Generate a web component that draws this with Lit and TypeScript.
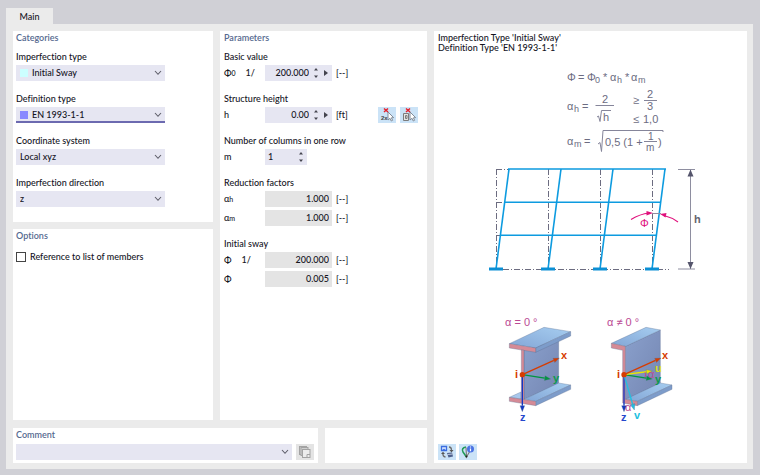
import { LitElement, html, svg, css, nothing } from "lit";
import { customElement, property } from "lit/decorators.js";

const chevron = html`<svg class="chevron" viewBox="0 0 8 6" aria-hidden="true"><path d="M1 1 L4 4.3 L7 1" /></svg>`;

@customElement("choice-field")
class ChoiceField extends LitElement {
  @property() label = "";
  @property() value = "";
  @property() swatch = "";
  @property({ type: Boolean }) active = false;

  static styles = css`
    :host { display: block; }
    label { display: block; height: 16px; line-height: 16px; }
    .box { display: flex; align-items: center; height: 16px; background: #e6e6f2; padding: 0 4px; position: relative; }
    .active { box-shadow: inset 0 -2px 0 #6c6ab0; }
    .swatch { width: 8px; height: 8px; flex: none; }
    select { appearance: none; border: 0; outline: 0; background: transparent; flex: 1; min-width: 0; font: inherit; color: inherit; padding: 0 12px 0 0; margin: 0; height: 16px; font-variant-ligatures: none; }
    .swatch + select { padding-left: 4px; }
    .chevron { position: absolute; right: 3px; top: 5px; width: 8px; height: 6px; fill: none; stroke: #5f5f6a; stroke-width: 1.1; pointer-events: none; }
  `;

  render() {
    return html`
      <label for="s">${this.label}</label>
      <div class="box ${this.active ? "active" : ""}">
        ${this.swatch ? html`<span class="swatch" style="background:${this.swatch}"></span>` : nothing}
        <select id="s"><option>${this.value}</option></select>
        ${chevron}
      </div>`;
  }
}

const flange = { top: "#a9c8ec", front: "#d58a96", side: "#7d9cca" };

const arrow = (x1: number, y1: number, x2: number, y2: number, color: string) => {
  const a = Math.atan2(y2 - y1, x2 - x1);
  const bx = x2 - 18 * Math.cos(a);
  const by = y2 - 18 * Math.sin(a);
  const dx = 7 * Math.sin(a);
  const dy = 7 * Math.cos(a);
  return svg`<path class="shaft" d="M${x1} ${y1} L${bx} ${by}" stroke=${color} />
    <path class="head" d="M${x2} ${y2} L${bx + dx} ${by - dy} L${bx - dx} ${by + dy} Z" fill=${color} />`;
};

const columns = [496, 548, 600, 652];

const drawing = html`
<svg class="drawing" viewBox="434 54 313 390" preserveAspectRatio="xMidYMin meet" role="img" aria-label="Initial sway sketch">
  <defs>
    <linearGradient id="web" x1="0" y1="0" x2="1" y2="1">
      <stop offset="0" stop-color="#8aa0cc" /><stop offset="1" stop-color="#7486b2" />
    </linearGradient>
    <linearGradient id="plate" x1="0" y1="1" x2="1" y2="0">
      <stop offset="0" stop-color="#83a6d6" /><stop offset="1" stop-color="#a6cdf0" />
    </linearGradient>
  </defs>

  <g class="formula">
    <text x="567" y="81">Φ</text><text x="578" y="81">=</text><text x="587" y="81">Φ</text><text class="sub" x="595" y="83">0</text>
    <text x="603" y="81">*</text><text x="610" y="81">α</text><text class="sub" x="617" y="83">h</text>
    <text x="625" y="81">*</text><text x="631" y="81">α</text><text class="sub" x="638" y="83">m</text>

    <text x="567" y="110">α</text><text class="sub" x="574" y="112">h</text><text x="582" y="110">=</text>
    <text x="602" y="103">2</text><text x="603" y="121">h</text>
    <text x="633" y="104">≥</text><text x="647" y="98">2</text><text x="647" y="110">3</text>
    <text x="633" y="123">≤</text><text x="643" y="123">1,0</text>

    <text x="567" y="145">α</text><text class="sub" x="574" y="147">m</text><text x="584" y="145">=</text>
    <text x="605" y="146">0,5 (1 +</text><text class="part" x="648" y="140">1</text><text class="part" x="646" y="151">m</text><text x="658" y="146">)</text>
    <path d="M595.5 105.5 H614 M644 100.5 H657 M644 141.5 H657" />
    <path d="M597 117 L598.500 116 L600 121.500 L601.500 110.500 H611" />
    <path d="M598 144 L600 142.5 L601.5 151.5 L603 130.5 H663 V132" />
  </g>

  <g class="dashed">
    ${columns.map((x) => svg`<path d="M${x + 0.5} 169 V269" />`)}
    <path d="M496 169.5 H509 M496 202.5 H505 M496 235.5 H501" />
    <path d="M503 269.5 H669" />
  </g>
  <g class="frame">
    ${columns.map((x) => svg`<path d="M${x} 269 L${x + 13} 169" /><path class="foot" d="M${x - 7} 269 h14" />`)}
    <path d="M508 169 H666 M504.500 202.300 H661 M500.300 235.300 H657" />
  </g>

  <g class="dim">
    <path d="M678 169.500 H695 M678 269 H695 M690.500 169 V269" />
    <path class="tip" d="M690.500 169.500 l3 7 h-6 Z M690.500 269 l3 -7 h-6 Z" />
    <path d="M652 213.500 H661" />
  </g>
  <text class="height" x="694" y="223">h</text>
  <g class="angle">
    <path d="M631 219.500 Q640 214 649 213" />
    <path d="M664 215.500 Q672 217.500 678 222" />
    <path class="tip" d="M653 213 l-6.500 -2 v4.500 Z M660 214 l6.500 -1 l-1 4.500 Z" />
    <text x="640" y="227">Φ</text>
  </g>

  <g transform="translate(490 310) scale(.33333)" class="solid">
    <path d="M102 120 L206 90 V222 L102 268 Z" fill="url(#web)" />
    <path d="M58 101 L162 52 L242 65 L137 114 Z" fill="url(#plate)" />
    <path d="M137 114 L242 65 V78 L137 127 Z" fill=${flange.side} />
    <path d="M58 101 L137 114 V127 L58 114 Z" fill=${flange.front} />
    <path d="M58 262 L93 246 V267 Z" fill=${flange.top} />
    <path d="M102 268 L206 219 L242 225 L137 274 Z" fill="url(#plate)" />
    <path d="M137 274 L242 225 V238 L137 287 Z" fill=${flange.side} />
    <path d="M58 262 L137 274 V287 L58 274 Z" fill=${flange.front} />
    <path d="M94 120 L102 121 V268 L94 267 Z" fill=${flange.front} />
    ${arrow(97, 194, 97, 305, "#1237c4")}
    ${arrow(97, 194, 182, 207, "#00963f")}
    ${arrow(97, 194, 208, 144, "#d63c00")}
    <circle cx="97" cy="194" r="8" fill="#d63c00" />
  </g>
  <g class="axis">
    <text class="alpha" x="505" y="326">α = 0 °</text>
    <text class="x" x="561" y="359">x</text><text class="i" x="515" y="378">i</text>
    <text class="y" x="553" y="382">y</text><text class="z" x="520" y="421">z</text>
  </g>

  <g transform="translate(590 310) scale(.33333)" class="solid">
    <path d="M106 109 L211 60 V220 L106 269 Z" fill="url(#web)" />
    <path d="M64 100 L168 52 L211 60 L107 109 Z" fill="url(#plate)" />
    <path d="M106 268 L211 219 L246 225 L142 274 Z" fill="url(#plate)" />
    <path d="M142 274 L246 225 V238 L142 287 Z" fill=${flange.side} />
    <path d="M64 100 L106 109 V268 L142 274 V287 L98 279 V121 L64 114 Z" fill=${flange.front} />
    ${arrow(102, 194, 102, 305, "#1237c4")}
    ${arrow(102, 194, 133, 300, "#22bfe0")}
    ${arrow(102, 194, 187, 207, "#00963f")}
    ${arrow(102, 194, 187, 183, "#e8e600")}
    ${arrow(102, 194, 213, 144, "#d63c00")}
    <path class="arc" d="M165 187 Q169 195 165 202" stroke="#c2408e" />
    <circle cx="102" cy="194" r="8" fill="#d63c00" />
  </g>
  <g class="axis">
    <text class="alpha" x="607" y="326">α ≠ 0 °</text>
    <text class="x" x="662" y="359">x</text><text class="i" x="617" y="378">i</text>
    <text class="u" x="655" y="372">u</text><text class="alpha" x="648" y="378">α</text>
    <text class="y" x="655" y="383">y</text><text class="alpha" x="625" y="411">α</text>
    <text class="z" x="621" y="421">z</text><text class="v" x="634" y="419">v</text>
  </g>
</svg>`;

const cursor = svg`<path d="M10 5 V13 L12 11.300 L13.300 14 L14.600 13.300 L13.400 10.800 L15.600 10.600 Z" fill="#fff" stroke="#77808c" stroke-width=".9" />
  <path d="M6 1.500 L10 5 M10 1.500 L6 5" stroke="#e5202b" stroke-width="1.500" />`;

const pickTwo = html`<svg viewBox="0 0 18 16" aria-hidden="true"><text x="3" y="13" class="tiny">2x</text>${cursor}</svg>`;
const pickOne = html`<svg viewBox="0 0 18 16" aria-hidden="true">
  <path d="M3.500 6.500 H8.500 V13.500 H3.500 Z M5.500 8.500 H7 V11.500 H5.500 Z" fill="#e4e4e4" stroke="#7c7c7c" />${cursor}</svg>`;
const swapIcon = html`<svg viewBox="0 0 18 16" aria-hidden="true">
  <path d="M3.500 2.500 H8.500 V6.500 H3.500 Z" fill="#dbe8ff" stroke="#3b6de0" stroke-width="1.300" /><path d="M4 6.500 L6 4.500 L8 6.500 Z" fill="#3b6de0" />
  <path d="M11 3 Q13.500 3 13.500 6.500" fill="none" stroke="#6b6b6b" stroke-width="1.300" /><path d="M11.500 6 H15.500 L13.500 8.500 Z" fill="#555" />
  <path d="M5 9 Q4.500 12.500 7.500 13" fill="none" stroke="#6b6b6b" stroke-width="1.300" /><path d="M3 10 L5 7.800 L7 10 Z" fill="#555" />
  <path d="M9 9 L14 8.500 L15 12.500 L10.500 13.500 Z" fill="#4c5f8c" /><path d="M9.500 10.500 L14.500 10" stroke="#c3cde0" /></svg>`;
const infoIcon = html`<svg viewBox="0 0 18 16" aria-hidden="true">
  <path d="M7 3 Q2 4 4 8 L7.500 13" fill="none" stroke="#1f9a56" stroke-width="1.500" />
  <path d="M7 3.500 L7.500 13 L11 7" fill="none" stroke="#777" stroke-width="1.100" /><circle cx="7.500" cy="12.500" r="1" fill="#222" />
  <circle cx="11.500" cy="5" r="3.500" fill="#4a72e4" /><path d="M11.500 4.500 V7.300 M11.500 2.500 V3.600" stroke="#fff" stroke-width="1.200" /></svg>`;
const copyIcon = html`<svg viewBox="0 0 18 16" aria-hidden="true">
  <g fill="#cfcfcf" stroke="#a3a3a3"><rect x="3.500" y="2.500" width="7" height="8" /><rect x="5" y="3.500" width="7" height="8" /><rect x="6.500" y="5.500" width="7.500" height="8" fill="#ececec" /></g>
  <path d="M11 13 V10.500 H14" fill="none" stroke="#a3a3a3" /></svg>`;

@customElement("app-root")
class AppRoot extends LitElement {
  static styles = css`
    :host { display: block; font-family: Lato, "Open Sans", "Noto Sans", sans-serif; font-size: 9px; font-weight: 500; font-variant-ligatures: none; line-height: 16px; color: #14141e; }
    * { box-sizing: border-box; }
    .page { min-height: 100vh; display: flex; flex-direction: column; background: #d0d0d6; padding: 8px 7px 6px 6px; }
    .tab { align-self: flex-start; border: 0; background: #ebebeb; font: inherit; color: inherit; padding: 2px 13px 0; width: 47px; height: 16px; line-height: 14px; }
    .sheet { flex: 1; background: #ebebeb; padding: 7px 6px 6px 7px; display: grid; grid-template-columns: 414fr 313fr; gap: 7px; }
    .left { display: flex; flex-direction: column; gap: 8px; }
    .upper { flex: 1; display: grid; grid-template-columns: 200fr 207fr; gap: 7px; }
    .lower { display: grid; grid-template-columns: 305fr 102fr; gap: 7px; }
    .stack { display: grid; grid-template-rows: 1fr 1fr; gap: 7px; }
    .panel { background: #fff; padding: 0 4px 0 3px; }
    .params { padding-left: 4px; }
    h2 { margin: 0 0 4px; font-size: 9px; font-weight: 600; line-height: 14px; color: #56698f; }
    .choices { width: 149px; display: flex; flex-direction: column; gap: 10px; }
    .check { display: flex; align-items: center; gap: 4px; }
    .options h2 { margin-bottom: 6px; }
    .check input { appearance: none; width: 10px; height: 10px; margin: 0; border: 1px solid #444; background: #fff; }
    .groups { display: flex; flex-direction: column; gap: 10px; }
    fieldset { border: 0; padding: 0; margin: 0; min-width: 0; display: flex; flex-direction: column; gap: 3px; }
    legend { padding: 0; height: 16px; float: left; margin-bottom: -3px; }
    .row { display: flex; align-items: center; height: 16px; }
    .symbol { width: 41px; display: flex; gap: 10px; }
    .symbol sub { font-size: 7px; vertical-align: baseline; }
    .box { width: 67px; height: 16px; display: flex; align-items: center; background: #e6e6f2; padding-right: 3px; }
    .narrow { width: 42px; }
    .fixed { background: #e4e4e4; }
    .box input { flex: 1; min-width: 0; border: 0; outline: 0; padding: 0 0 0 3px; height: 16px; background: transparent; font: inherit; color: inherit; text-align: right; }
    .narrow input { text-align: left; }
    .spin { border: 0; padding: 0; margin: 0 0 0 4px; background: none; height: 16px; display: flex; align-items: center; }
    .spin svg { width: 6px; height: 12px; fill: #44444e; }
    .unit { margin-left: 4px; }
    .tools { display: flex; gap: 4px; margin-left: auto; margin-right: 5px; }
    .tool { width: 18px; height: 16px; border: 0; padding: 0; background: #cbe3f7; display: block; flex: none; }
    .tool svg { display: block; width: 18px; height: 16px; }
    .tiny { font: bold 6px "Liberation Sans", sans-serif; fill: #444; }
    .off { background: #e4e4e4; }
    .comment { display: flex; gap: 4px; padding-bottom: 3px; }
    .comment .box { flex: 1; position: relative; padding: 0; }
    .comment select { appearance: none; border: 0; outline: 0; background: transparent; width: 100%; height: 16px; font: inherit; }
    .chevron { position: absolute; right: 3px; top: 5px; width: 8px; height: 6px; fill: none; stroke: #5f5f6a; stroke-width: 1.1; pointer-events: none; }
    .note h2 { margin-bottom: 2px; }
    .preview { background: #fff; display: flex; flex-direction: column; }
    .caption { margin: 0; padding: 2px 4px 1px; line-height: 10px; }
    .drawing { display: block; width: 100%; flex: 1; min-height: 390px; }
    .actions { display: flex; gap: 3px; padding: 0 4px 3px; }
    .formula text { font: 11px "Liberation Sans", sans-serif; fill: #6c6c82; }
    .formula .sub { font-size: 9px; }
    .formula .part { font-size: 10px; }
    .formula path { fill: none; stroke: #85859a; stroke-width: 1; }
    .dashed path { stroke: #6c6c80; stroke-width: 1; stroke-dasharray: 6 2 1 2; fill: none; }
    .frame path { stroke: #0d9be0; stroke-width: 1.600; fill: none; }
    .frame .foot { stroke-width: 3; stroke: #0b8fd4; }
    .dim path { stroke: #8e8ea0; stroke-width: 1; fill: none; }
    .dim .tip { fill: #55556c; stroke: none; }
    .height { font: bold 11px "Liberation Sans", sans-serif; fill: #66666f; }
    .angle path { stroke: #e0107c; stroke-width: 1.100; fill: none; }
    .angle .tip { fill: #e0107c; stroke: none; }
    .angle text { font: 11px "Liberation Sans", sans-serif; fill: #e0107c; }
    .solid path { stroke-linejoin: round; }
    .solid path[fill] { stroke: #5a6c90; stroke-width: 1; }
    .solid .head { stroke: none; }
    .solid .shaft { stroke-width: 4; }
    .solid .arc { fill: none; stroke-width: 3; }
    .axis text { font: bold 11px "Liberation Sans", sans-serif; }
    .axis .alpha { font-weight: 400; font-size: 11px; fill: #bb4a94; }
    .axis .x, .axis .i { fill: #d63c00; }
    .axis .y { fill: #0a9a4a; }
    .axis .z { fill: #2447cc; }
    .axis .u { fill: #d8dc20; }
    .axis .v { fill: #22bfe0; }
  `;

  private spinner(label: string) {
    return html`<button class="spin" aria-label=${label}><svg viewBox="0 0 6 12"><path d="M1 3.500 L3 1 L5 3.500 Z M1 8.500 L3 11 L5 8.500 Z" /></svg></button>`;
  }

  private more(label: string) {
    return html`<button class="spin" aria-label=${label}><svg viewBox="0 0 6 12"><path d="M1 3 L5 6 L1 9 Z" /></svg></button>`;
  }

  private fixedRow(symbol: unknown, value: string, label: string) {
    return html`<div class="row"><span class="symbol">${symbol}</span>
      <span class="box fixed"><input aria-label=${label} readonly .value=${value} /></span><span class="unit">[--]</span></div>`;
  }

  render() {
    return html`
      <div class="page">
        <button class="tab">Main</button>
        <main class="sheet">
          <div class="left">
            <div class="upper">
              <div class="stack">
                <section class="panel">
                  <h2>Categories</h2>
                  <div class="choices">
                    <choice-field label="Imperfection type" value="Initial Sway" swatch="#ccffff"></choice-field>
                    <choice-field label="Definition type" value="EN 1993-1-1" swatch="#8888ff" active></choice-field>
                    <choice-field label="Coordinate system" value="Local xyz"></choice-field>
                    <choice-field label="Imperfection direction" value="z"></choice-field>
                  </div>
                </section>
                <section class="panel options">
                  <h2>Options</h2>
                  <label class="check"><input type="checkbox" />Reference to list of members</label>
                </section>
              </div>
              <section class="panel params">
                <h2>Parameters</h2>
                <div class="groups">
                  <fieldset>
                    <legend>Basic value</legend>
                    <div class="row"><span class="symbol"><span>Φ<sub>0</sub></span><span>1/</span></span>
                      <span class="box"><input aria-label="Basic value" value="200.000" />${this.spinner("Step basic value")}${this.more("More")}</span><span class="unit">[--]</span></div>
                  </fieldset>
                  <fieldset>
                    <legend>Structure height</legend>
                    <div class="row"><span class="symbol">h</span>
                      <span class="box"><input aria-label="Structure height" value="0.00" />${this.spinner("Step height")}${this.more("More")}</span><span class="unit">[ft]</span>
                      <span class="tools"><button class="tool" aria-label="Pick two points">${pickTwo}</button><button class="tool" aria-label="Pick member">${pickOne}</button></span></div>
                  </fieldset>
                  <fieldset>
                    <legend>Number of columns in one row</legend>
                    <div class="row"><span class="symbol">m</span>
                      <span class="box narrow"><input aria-label="Number of columns" value="1" />${this.spinner("Step columns")}</span></div>
                  </fieldset>
                  <fieldset>
                    <legend>Reduction factors</legend>
                    ${this.fixedRow(html`<span>α<sub>h</sub></span>`, "1.000", "Reduction factor for height")}
                    ${this.fixedRow(html`<span>α<sub>m</sub></span>`, "1.000", "Reduction factor for columns")}
                  </fieldset>
                  <fieldset>
                    <legend>Initial sway</legend>
                    ${this.fixedRow(html`<span>Φ</span><span>1/</span>`, "200.000", "Inverse initial sway")}
                    ${this.fixedRow("Φ", "0.005", "Initial sway")}
                  </fieldset>
                </div>
              </section>
            </div>
            <div class="lower">
              <section class="panel note">
                <h2 id="comment-title">Comment</h2>
                <div class="comment">
                  <span class="box"><select aria-labelledby="comment-title"><option></option></select>${chevron}</span>
                  <button class="tool off" aria-label="Comment library">${copyIcon}</button>
                </div>
              </section>
              <section class="panel"></section>
            </div>
          </div>
          <section class="preview">
            <p class="caption">Imperfection Type 'Initial Sway'<br />Definition Type 'EN 1993-1-1'</p>
            ${drawing}
            <div class="actions">
              <button class="tool" aria-label="Switch picture">${swapIcon}</button>
              <button class="tool" aria-label="Show information">${infoIcon}</button>
            </div>
          </section>
        </main>
      </div>`;
  }
}
